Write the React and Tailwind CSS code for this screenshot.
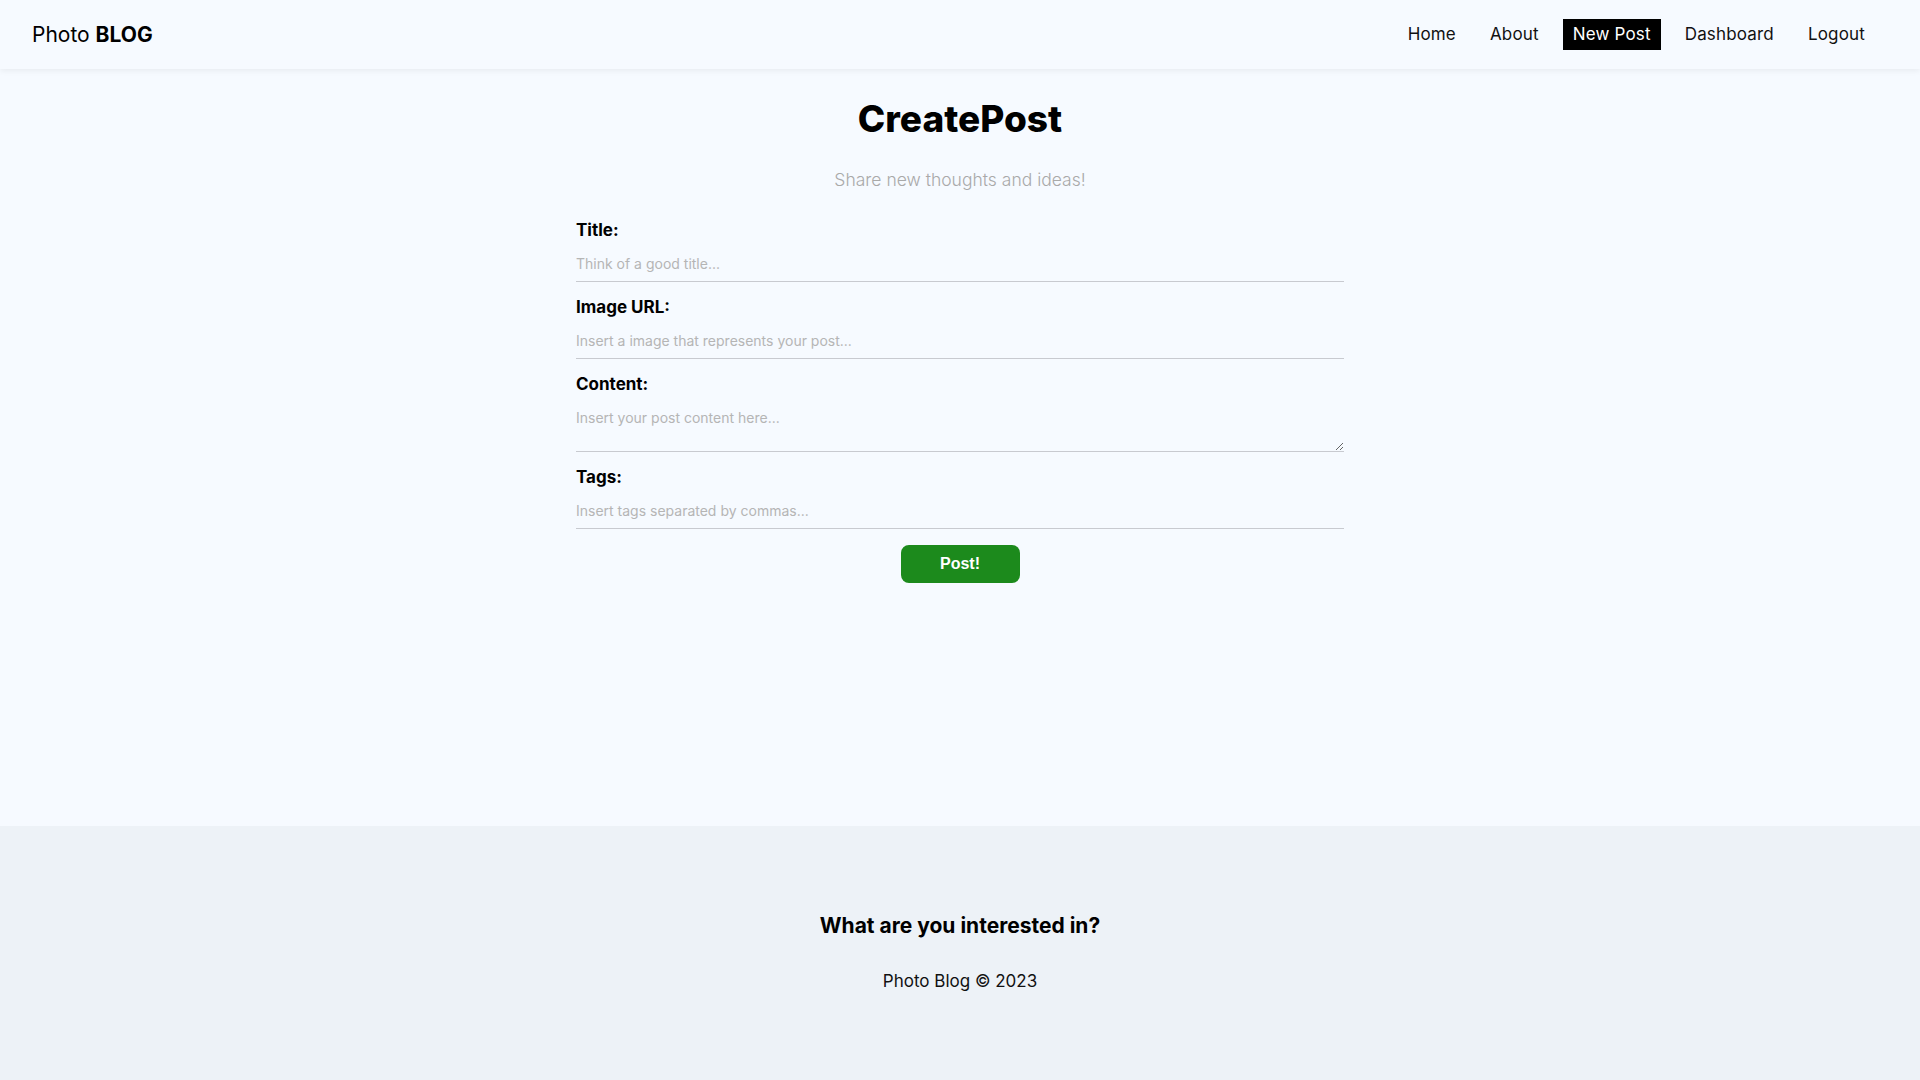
const FONT = { fontFamily: "Inter, 'Open Sans', 'Liberation Sans', sans-serif" };

function NavLink({ children, active }) {
  return (
    <a
      href="#"
      className={
        active
          ? "px-[10px] h-[31px] flex items-center bg-black text-white"
          : "px-[10px] h-[31px] flex items-center text-[#111]"
      }
    >
      {children}
    </a>
  );
}

function Field({ label, placeholder, textarea }) {
  return (
    <div className="mb-[15px]">
      <label className="block text-[17px] leading-[20px] font-bold text-black">{label}</label>
      {textarea ? (
        <textarea
          placeholder={placeholder}
          className="block w-full h-[58px] pt-[15px] text-[14px] leading-[17px] bg-transparent border-b border-[#c8cad0] outline-none placeholder:text-[#b5b5b5]"
        />
      ) : (
        <input
          type="text"
          placeholder={placeholder}
          className="block w-full h-[42px] pt-[5px] text-[14px] bg-transparent border-b border-[#c8cad0] outline-none placeholder:text-[#b5b5b5]"
        />
      )}
    </div>
  );
}

export default function App() {
  return (
    <div className="min-h-screen flex flex-col bg-[#f6faff]" style={FONT}>
      <header className="h-[69px] flex items-center justify-between pl-[32px] pr-[45px] bg-[#f6faff] shadow-[0_2px_6px_rgba(0,0,0,0.06)] relative z-10">
        <div className="text-[21px] text-black">
          Photo <span className="font-bold">BLOG</span>
        </div>
        <nav className="flex items-center gap-[14px] text-[17px] tracking-[0.01em]">
          <NavLink>Home</NavLink>
          <NavLink>About</NavLink>
          <NavLink active>New Post</NavLink>
          <NavLink>Dashboard</NavLink>
          <NavLink>Logout</NavLink>
        </nav>
      </header>

      <main className="flex-1 flex flex-col items-center">
        <h1 className="mt-[26px] text-[37px] leading-[48px] font-extrabold text-black">CreatePost</h1>
        <p className="mt-[25px] text-[17.5px] leading-[24px] font-light text-[#a9a9a9]">
          Share new thoughts and ideas!
        </p>
        <form className="w-[768px] mt-[28px] flex flex-col" onSubmit={(e) => e.preventDefault()}>
          <Field label="Title:" placeholder="Think of a good title..." />
          <Field label="Image URL:" placeholder="Insert a image that represents your post..." />
          <Field label="Content:" placeholder="Insert your post content here..." textarea />
          <Field label="Tags:" placeholder="Insert tags separated by commas..." />
          <button
            type="submit"
            className="self-center mt-[1px] w-[119px] h-[38px] rounded-[8px] bg-[#1c8a1c] text-white text-[16px] font-bold"
            style={{ fontFamily: "'Liberation Sans', Arial, sans-serif" }}
          >
            Post!
          </button>
        </form>
      </main>

      <footer className="h-[254px] bg-[#edf2f7] flex flex-col items-center pt-[88px]">
        <h3 className="text-[21px] leading-[24px] font-bold text-black">What are you interested in?</h3>
        <p className="mt-[31px] text-[17px] leading-[24px] text-[#111]">Photo Blog © 2023</p>
      </footer>
    </div>
  );
}
